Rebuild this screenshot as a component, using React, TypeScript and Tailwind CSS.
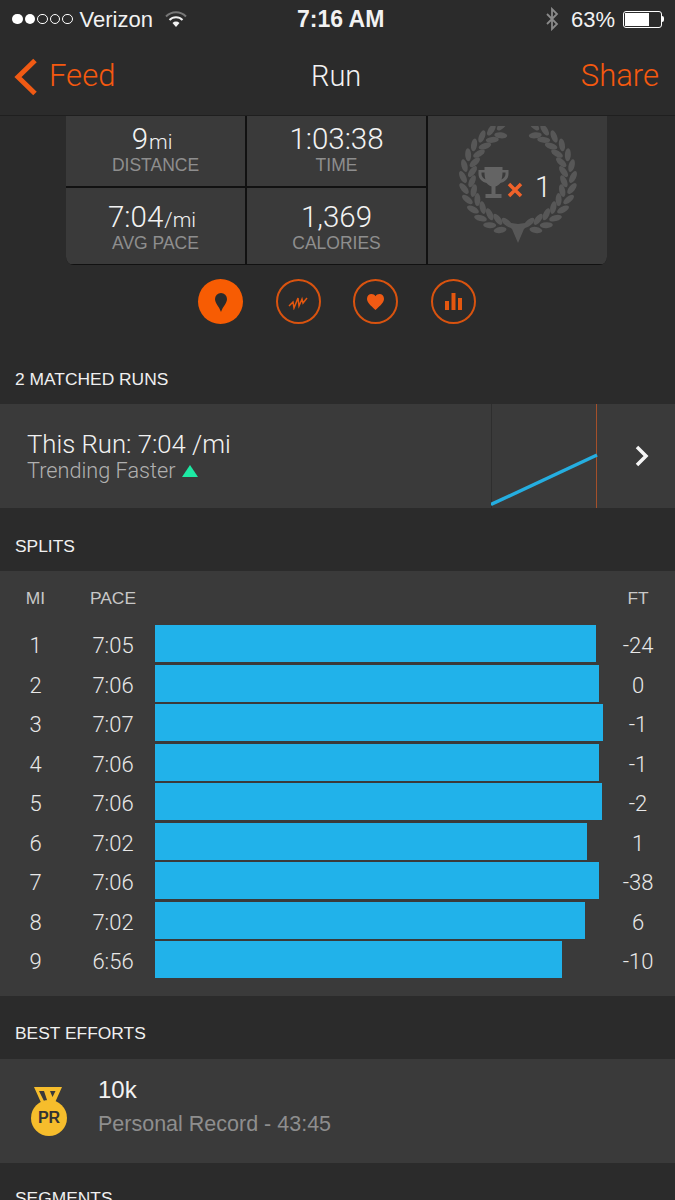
const splits = [
    { mi: 1, pace: "7:05", bar: 441, ft: "-24" },
    { mi: 2, pace: "7:06", bar: 444, ft: "0" },
    { mi: 3, pace: "7:07", bar: 448, ft: "-1" },
    { mi: 4, pace: "7:06", bar: 444, ft: "-1" },
    { mi: 5, pace: "7:06", bar: 447, ft: "-2" },
    { mi: 6, pace: "7:02", bar: 432, ft: "1" },
    { mi: 7, pace: "7:06", bar: 444, ft: "-38" },
    { mi: 8, pace: "7:02", bar: 430, ft: "6" },
    { mi: 9, pace: "6:56", bar: 407, ft: "-10" },
];

function StatusBar() {
    return (
        <div className="relative flex h-[38px] items-center justify-between pl-[12px] pr-[11px] text-[22px] text-[#f2f2f2]">
            <div className="flex items-center">
                <div className="flex gap-[2px]">
                    <span className="h-[10.500px] w-[10.500px] rounded-full bg-white" />
                    <span className="h-[10.500px] w-[10.500px] rounded-full bg-white" />
                    <span className="h-[10.500px] w-[10.500px] rounded-full border border-white" />
                    <span className="h-[10.500px] w-[10.500px] rounded-full border border-white" />
                    <span className="h-[10.500px] w-[10.500px] rounded-full border border-white" />
                </div>
                <span className="ml-[7px]">Verizon</span>
                <svg className="ml-[12px]" width="22" height="18" viewBox="0 0 22 18">
                    <path d="M1 6.500a14 14 0 0 1 20 0" fill="none" stroke="#777" strokeWidth="2" />
                    <path d="M4.500 10a9 9 0 0 1 13 0" fill="none" stroke="#f2f2f2" strokeWidth="2" />
                    <path d="M7.500 13a5 5 0 0 1 7 0L11 17z" fill="#f2f2f2" />
                </svg>
            </div>
            <span className="absolute left-[297px] text-[23px] font-semibold">7:16 AM</span>
            <div className="flex items-center">
                <svg width="14" height="24" viewBox="0 0 14 24">
                    <path d="M2 7l10 10-5 5V2l5 5L2 17" fill="none" stroke="#8a8a8a" strokeWidth="1.800" />
                </svg>
                <span className="ml-[12px]">63%</span>
                <div className="ml-[8px] flex items-center">
                    <div className="h-[17px] w-[39px] rounded-[3px] border border-white p-[1px]">
                        <div className="h-full w-[24px] bg-white" />
                    </div>
                    <div className="h-[6px] w-[2px] rounded-r-full bg-white" />
                </div>
            </div>
        </div>
    );
}

function NavBar() {
    return (
        <div className="relative flex h-[78px] items-center justify-between border-b border-[#1f1f1f] pl-[14px] pr-[16px] text-[31px] text-[#f5590f]">
            <div className="flex items-center gap-[11px]">
                <svg width="24" height="38" viewBox="0 0 24 38">
                    <path d="M21 2.500L4 19l17 16.500" fill="none" stroke="#f05a14" strokeWidth="5" />
                </svg>
                <span className="font-['Roboto'] font-light">Feed</span>
            </div>
            <span className="absolute left-[311px] font-['Roboto'] text-[29px] font-light text-[#f2f2f2]">Run</span>
            <span className="font-['Roboto'] font-light">Share</span>
        </div>
    );
}

function Stat({ value, unit, label, className }: { value: string; unit?: string; label: string; className: string }) {
    return (
        <div className={`flex flex-col items-center bg-[#3a3a3a] ${className}`}>
            <div className="font-['Roboto'] text-[29.500px] leading-[32px] font-light text-[#f2f2f2]">
                {value}
                {unit && <span className="mr-[7px] ml-[1px] text-[21px] leading-none">{unit}</span>}
            </div>
            <div className="text-[17.500px] leading-[20px] text-[#8e8e8e]">{label}</div>
        </div>
    );
}

function Wreath() {
    const leaves: { x: number; y: number; r: number }[] = [];
    for (let a = 14; a <= 160; a += 12) {
        [-1, 1].forEach((side) => {
            [
                { radius: 46, tilt: -28, shift: 0 },
                { radius: 55, tilt: 28, shift: 5 },
            ].forEach(({ radius, tilt, shift }) => {
                const angle = a + shift;
                const t = (angle * Math.PI) / 180;
                leaves.push({
                    x: 60 + side * radius * Math.sin(t),
                    y: 52 + radius * Math.cos(t),
                    r: side * (90 - angle + tilt),
                });
            });
        });
    }
    return (
        <svg width="120" height="118" viewBox="0 0 120 118">
            {leaves.map((leaf, i) => (
                <ellipse
                    key={i}
                    cx={leaf.x}
                    cy={leaf.y}
                    rx="3"
                    ry="6.500"
                    fill="#575757"
                    transform={`rotate(${leaf.r} ${leaf.x} ${leaf.y})`}
                />
            ))}
            <path d="M60 117l-6-14-8-7 14 2 14-2-8 7z" fill="#575757" />
        </svg>
    );
}

function Trophy() {
    return (
        <svg width="33" height="33" viewBox="0 0 32 33">
            <path d="M7 1h18v3h6v4c0 5-4 8-8 9-1.500 2-3.500 3-5 3.500V28h6v4H8v-4h6v-7.500c-1.500-.5-3.500-1.500-5-3.500-4-1-8-4-8-9V4h6z" fill="#646464" />
            <path d="M4 6.500v1.500c0 2.500 1.800 4.500 4 5.500-.6-2-1-4.500-1-7zM28 6.500v1.500c0 2.500-1.800 4.500-4 5.500.6-2 1-4.500 1-7z" fill="#3a3a3a" />
        </svg>
    );
}

function SummaryCard() {
    return (
        <div className="ml-[66px] mr-[68px] flex h-[149px] gap-[2px] overflow-hidden rounded-b-[8px] bg-[#111] pb-[1px]">
            <div className="grid w-[360px] grid-cols-[179px_179px] grid-rows-[70px_76px] gap-[2px]">
                <Stat value="9" unit="mi" label="DISTANCE" className="pt-[7px]" />
                <Stat value="1:03:38" label="TIME" className="pt-[7px]" />
                <Stat value="7:04" unit="/mi" label="AVG PACE" className="pt-[13px]" />
                <Stat value="1,369" label="CALORIES" className="pt-[13px]" />
            </div>
            <div className="relative flex flex-1 justify-center bg-[#3a3a3a] pt-[10px]">
                <Wreath />
                <div className="absolute left-[49px] top-[47px] flex items-center">
                    <Trophy />
                    <svg className="mt-[14px] -ml-[3px]" width="16" height="16" viewBox="0 0 16 16">
                        <path d="M2 2l12 12M14 2L2 14" stroke="#f0622a" strokeWidth="3.500" />
                    </svg>
                    <span className="ml-[12px] mt-[10px] font-['Roboto'] text-[29px] leading-none font-light text-[#f2f2f2]">1</span>
                </div>
            </div>
        </div>
    );
}

function TabIcons() {
    return (
        <div className="mt-[14px] flex justify-center gap-[32.670px] pr-[1px]">
            <div className="flex h-[45px] w-[45px] items-center justify-center rounded-full bg-[#f75c03]">
                <svg width="14" height="20" viewBox="0 0 14 20">
                    <path d="M7 20C5 14 1 11.500 1 7a6 6 0 0 1 12 0c0 4.500-4 7-6 13z" fill="#2b2b2b" />
                </svg>
            </div>
            <div className="flex h-[45px] w-[45px] items-center justify-center rounded-full border-2 border-[#d9530f]">
                <svg width="20" height="16" viewBox="0 0 20 16">
                    <path d="M1 12l4-4 1 6 4-10 1 8 3-7 1 4 4-5" fill="none" stroke="#e4570f" strokeWidth="1.500" />
                </svg>
            </div>
            <div className="flex h-[45px] w-[45px] items-center justify-center rounded-full border-2 border-[#d9530f]">
                <svg width="17" height="16" viewBox="0 0 17 16">
                    <path d="M8.500 16C3 11 0 8.500 0 4.800 0 2 2 0 4.500 0c1.700 0 3.200.9 4 2.300C9.300.9 10.800 0 12.500 0 15 0 17 2 17 4.800c0 3.700-3 6.200-8.500 11.200z" fill="#f05a14" />
                </svg>
            </div>
            <div className="flex h-[45px] w-[45px] items-center justify-center rounded-full border-2 border-[#d9530f]">
                <svg width="17" height="17" viewBox="0 0 17 17">
                    <path d="M0 8h4v9H0zM6.500 0h4v17h-4zM13 5h4v12h-4z" fill="#e4570f" />
                </svg>
            </div>
        </div>
    );
}

function SectionTitle({ children, className }: { children: string; className: string }) {
    return <div className={`pl-[15px] text-[17.400px] leading-[20px] text-[#f0f0f0] ${className}`}>{children}</div>;
}

function MatchedRuns() {
    return (
        <div className="relative flex h-[104px] bg-[#3a3a3a]">
            <div className="w-[491px] pl-[27px] pt-[26px]">
                <div className="font-['Roboto'] text-[25.700px] leading-[28px] font-light text-[#f2f2f2]">This Run: 7:04 /mi</div>
                <div className="flex items-center gap-[6px] font-['Roboto'] text-[21.700px] leading-[26px] font-light text-[#b0b0b0]">
                    Trending Faster
                    <span className="h-0 w-0 border-x-[8px] border-b-[12px] border-x-transparent border-b-[#1de9a3]" />
                </div>
            </div>
            <svg width="109" height="104" viewBox="0 0 109 104">
                <path d="M.5 0v104" stroke="#2e2e2e" />
                <path d="M105.500 0v104" stroke="#a4502a" />
                <path d="M0 100.500L106 51" stroke="#25aee0" strokeWidth="3.500" />
            </svg>
            <svg className="mt-[40px] ml-[34px]" width="16" height="24" viewBox="0 0 16 24">
                <path d="M3 3l9 9-9 9" fill="none" stroke="#f5f5f5" strokeWidth="3.500" />
            </svg>
        </div>
    );
}

function Splits() {
    return (
        <div className="h-[425px] bg-[#3a3a3a] pt-[17px] text-[#e8e8e8]">
            <div className="flex h-[20px] items-center text-[17.400px] text-[#c8c8c8]">
                <div className="w-[71px] text-center">MI</div>
                <div className="w-[84px] text-center">PACE</div>
                <div className="w-[465px]" />
                <div className="w-[36px] text-center">FT</div>
            </div>
            <div className="mt-[16px] flex flex-col">
                {splits.map((split) => (
                    <div key={split.mi} className="flex h-[39.500px] items-center font-['Roboto'] text-[22px] font-light">
                        <div className="w-[71px] pt-[4px] text-center">{split.mi}</div>
                        <div className="w-[84px] pt-[4px] text-center">{split.pace}</div>
                        <div className="w-[465px]">
                            <div className="h-[37px] bg-[#21b2ea]" style={{ width: split.bar }} />
                        </div>
                        <div className="w-[36px] pt-[4px] text-center">{split.ft}</div>
                    </div>
                ))}
            </div>
        </div>
    );
}

function BestEfforts() {
    return (
        <div className="flex h-[104px] bg-[#3a3a3a]">
            <div className="w-[98px] pl-[31px] pt-[28px]">
                <div className="relative h-[49px] w-[36px]">
                    <svg width="36" height="20" viewBox="0 0 36 20">
                        <path d="M3 0h28l-9 20h-10zM8 4l6 12h3L13 4zM19 4l2.500 6 3-6z" fill="#f6bd2c" fillRule="evenodd" />
                    </svg>
                    <div className="absolute top-[13px] flex h-[36px] w-[36px] items-center justify-center rounded-full bg-[#f6bd2c] text-[16px] font-bold text-[#333]">
                        PR
                    </div>
                </div>
            </div>
            <div className="pt-[16px]">
                <div className="text-[24px] leading-[30px] text-[#f2f2f2]">10k</div>
                <div className="mt-[5px] text-[21.500px] leading-[28px] text-[#8e8e8e]">Personal Record - 43:45</div>
            </div>
        </div>
    );
}

export default function App() {
    return (
        <div className="h-[1200px] w-[675px] overflow-hidden bg-[#2b2b2b] font-['Liberation_Sans',sans-serif]">
            <StatusBar />
            <NavBar />
            <SummaryCard />
            <TabIcons />
            <SectionTitle className="pt-[45px] pb-[15px]">2 MATCHED RUNS</SectionTitle>
            <MatchedRuns />
            <SectionTitle className="pt-[28px] pb-[15px]">SPLITS</SectionTitle>
            <Splits />
            <SectionTitle className="pt-[27px] pb-[16px]">BEST EFFORTS</SectionTitle>
            <BestEfforts />
            <SectionTitle className="pt-[25px]">SEGMENTS</SectionTitle>
        </div>
    );
}
